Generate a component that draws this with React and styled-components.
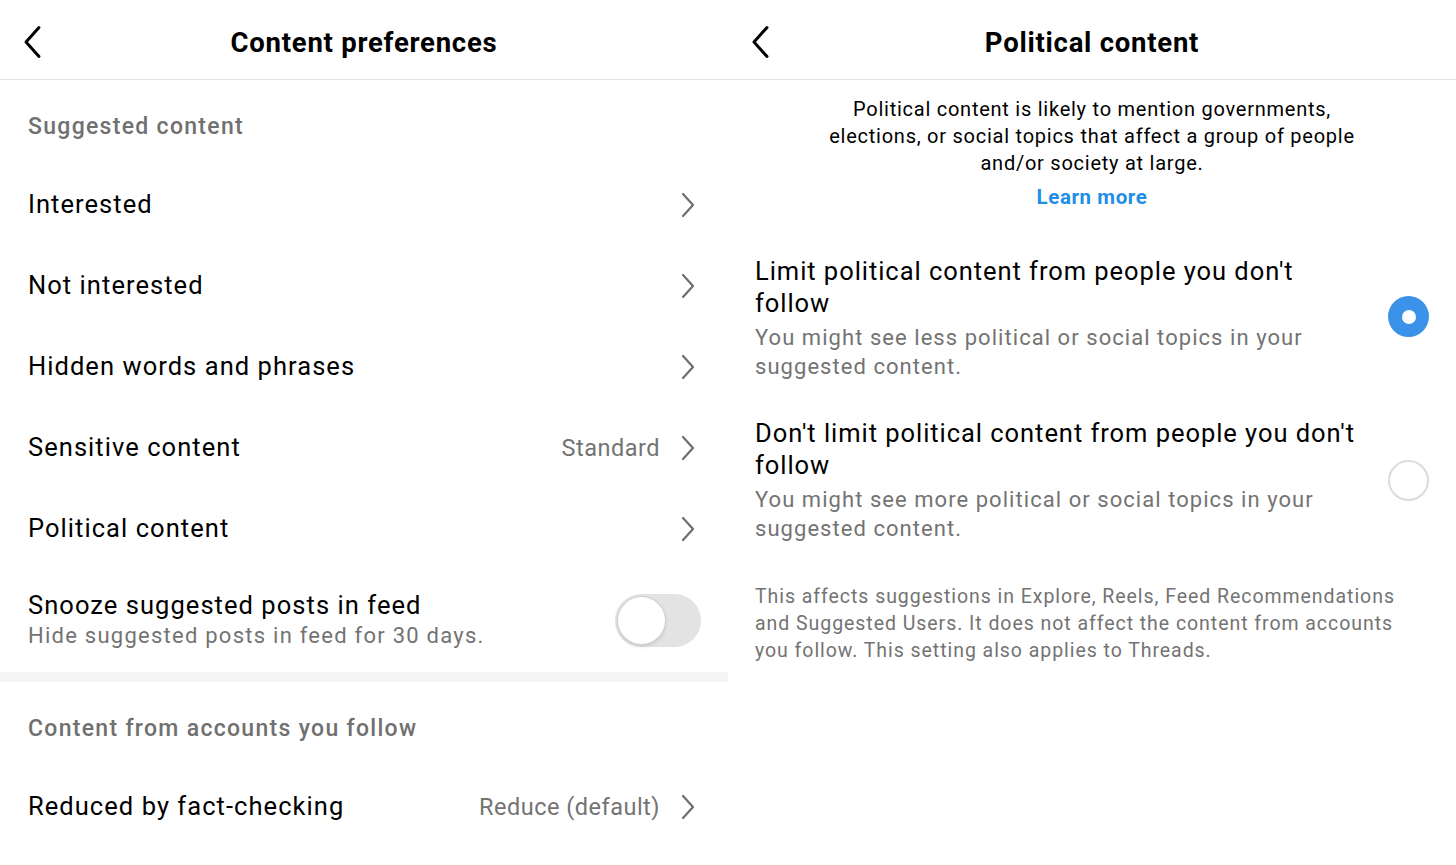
import React from "react";
import styled, { createGlobalStyle } from "styled-components";

const Global = createGlobalStyle`
  html, body { margin: 0; padding: 0; background: #fff; }
  body { font-family: Roboto, "Liberation Sans", sans-serif; color: #000; -webkit-font-smoothing: antialiased; }
  * { box-sizing: border-box; }
`;

const Page = styled.div`
  display: grid;
  grid-template-columns: 728px 728px;
  width: 1456px;
  height: 865px;
  overflow: hidden;
`;

const Panel = styled.section`
  display: flex;
  flex-direction: column;
`;

const Header = styled.header`
  position: relative;
  height: 80px;
  border-bottom: 1px solid #e3e3e3;
  display: flex;
  align-items: center;
  justify-content: center;
`;

const BackButton = styled.button`
  position: absolute;
  left: 17px;
  top: 24px;
  width: 30px;
  height: 36px;
  border: 0;
  background: none;
  padding: 0;
  display: flex;
  align-items: center;
  justify-content: center;
`;

const Title = styled.h1`
  margin: 0;
  font-size: 27.5px;
  font-weight: 700;
  letter-spacing: 0.75px;
  line-height: 32px;
  padding-top: 6px;
`;

const SectionHeading = styled.div`
  padding: 32px 28px 22px;
  font-size: 23px;
  line-height: 30px;
  font-weight: 500;
  letter-spacing: 1.3px;
  color: #707070;
`;

const Row = styled.div`
  height: ${(p) => p.$h || 81}px;
  padding: 0 28px 0 28px;
  display: flex;
  align-items: center;
  gap: 16px;
`;

const RowText = styled.div`
  flex: 1;
  display: flex;
  flex-direction: column;
`;

const RowLabel = styled.div`
  font-size: 25.5px;
  line-height: 31px;
  letter-spacing: 1.05px;
  color: #000;
`;

const RowSub = styled.div`
  font-size: 22px;
  line-height: 30px;
  color: #737373;
  letter-spacing: 1.25px;
`;

const RowValue = styled.div`
  font-size: 23.5px;
  color: #737373;
  letter-spacing: 0.5px;
  margin-right: 2px;
`;

const ChevronWrap = styled.div`
  width: 20px;
  display: flex;
  justify-content: center;
  margin-right: 2px;
`;

const Toggle = styled.div`
  width: 86px;
  height: 53px;
  border-radius: 27px;
  background: #e3e3e3;
  padding: 3px;
  display: flex;
  align-items: center;
  margin-right: -1px;
`;

const Knob = styled.div`
  width: 47px;
  height: 47px;
  border-radius: 50%;
  background: #fff;
  box-shadow: 0 0 0 1px #d0d0d0, 0 2px 4px rgba(0, 0, 0, 0.15);
`;

const Divider = styled.div`
  height: 10px;
  background: #f5f5f5;
`;

const Intro = styled.div`
  padding: 16px 20px 0;
  text-align: center;
  font-size: 20px;
  line-height: 27px;
  color: #000;
  letter-spacing: 0.75px;
`;

const LearnMore = styled.a`
  display: block;
  margin-top: 7px;
  text-align: center;
  font-size: 20.5px;
  line-height: 27px;
  font-weight: 700;
  letter-spacing: 0.6px;
  color: #1f8ee5;
  text-decoration: none;
`;

const Options = styled.div`
  margin-top: 44px;
  display: flex;
  flex-direction: column;
  gap: 36px;
`;

const Option = styled.div`
  display: flex;
  align-items: center;
  padding: 0 27px 0 27px;
`;

const OptionText = styled.div`
  width: 640px;
  display: flex;
  flex-direction: column;
`;

const OptionTitle = styled.div`
  font-size: 25.5px;
  line-height: 32px;
  letter-spacing: 0.95px;
  color: #000;
  white-space: nowrap;
`;

const OptionSub = styled.div`
  margin-top: 4px;
  font-size: 22px;
  line-height: 29px;
  color: #737373;
  letter-spacing: 1.05px;
  white-space: nowrap;
`;

const Radio = styled.div`
  margin-left: auto;
  margin-top: ${(p) => (p.$on ? "-3px" : "0")};
  width: 41px;
  height: 41px;
  border-radius: 50%;
  flex-shrink: 0;
  ${(p) =>
    p.$on
      ? `background: #3a93e8; display:flex; align-items:center; justify-content:center;`
      : `border: 2.5px solid #dbdbdb;`}
`;

const RadioDot = styled.div`
  width: 14px;
  height: 14px;
  border-radius: 50%;
  background: #fff;
`;

const Footnote = styled.p`
  margin: 40px 0 0;
  padding: 0 20px 0 27px;
  font-size: 19.5px;
  line-height: 27px;
  color: #737373;
  letter-spacing: 0.95px;
  white-space: nowrap;
`;

const Back = () => (
  <BackButton aria-label="Back">
    <svg width="22" height="34" viewBox="0 0 22 34">
      <path d="M18 2.5 L5 17 L18 31.5" fill="none" stroke="#000" strokeWidth="3" strokeLinecap="round" strokeLinejoin="round" />
    </svg>
  </BackButton>
);

const Chevron = () => (
  <ChevronWrap>
    <svg width="14" height="26" viewBox="0 0 14 26">
      <path d="M2 2 L12 13 L2 24" fill="none" stroke="#6e6e6e" strokeWidth="2.2" strokeLinecap="round" strokeLinejoin="round" />
    </svg>
  </ChevronWrap>
);

const NavRow = ({ label, value }) => (
  <Row>
    <RowText>
      <RowLabel>{label}</RowLabel>
    </RowText>
    {value && <RowValue>{value}</RowValue>}
    <Chevron />
  </Row>
);

export default function App() {
  return (
    <Page>
      <Global />
      <Panel>
        <Header>
          <Back />
          <Title>Content preferences</Title>
        </Header>
        <SectionHeading>Suggested content</SectionHeading>
        <NavRow label="Interested" />
        <NavRow label="Not interested" />
        <NavRow label="Hidden words and phrases" />
        <NavRow label="Sensitive content" value="Standard" />
        <NavRow label="Political content" />
        <Row $h={103}>
          <RowText>
            <RowLabel>Snooze suggested posts in feed</RowLabel>
            <RowSub>Hide suggested posts in feed for 30 days.</RowSub>
          </RowText>
          <Toggle>
            <Knob />
          </Toggle>
        </Row>
        <Divider />
        <SectionHeading>Content from accounts you follow</SectionHeading>
        <NavRow label="Reduced by fact-checking" value="Reduce (default)" />
      </Panel>
      <Panel>
        <Header>
          <Back />
          <Title>Political content</Title>
        </Header>
        <Intro>
          Political content is likely to mention governments,
          <br />
          elections, or social topics that affect a group of people
          <br />
          and/or society at large.
        </Intro>
        <LearnMore href="#">Learn more</LearnMore>
        <Options>
          <Option>
            <OptionText>
              <OptionTitle>
                Limit political content from people you don't
                <br />
                follow
              </OptionTitle>
              <OptionSub>
                You might see less political or social topics in your
                <br />
                suggested content.
              </OptionSub>
            </OptionText>
            <Radio $on>
              <RadioDot />
            </Radio>
          </Option>
          <Option>
            <OptionText>
              <OptionTitle>
                Don't limit political content from people you don't
                <br />
                follow
              </OptionTitle>
              <OptionSub>
                You might see more political or social topics in your
                <br />
                suggested content.
              </OptionSub>
            </OptionText>
            <Radio />
          </Option>
        </Options>
        <Footnote>
          This affects suggestions in Explore, Reels, Feed Recommendations
          <br />
          and Suggested Users. It does not affect the content from accounts
          <br />
          you follow. This setting also applies to Threads.
        </Footnote>
      </Panel>
    </Page>
  );
}
